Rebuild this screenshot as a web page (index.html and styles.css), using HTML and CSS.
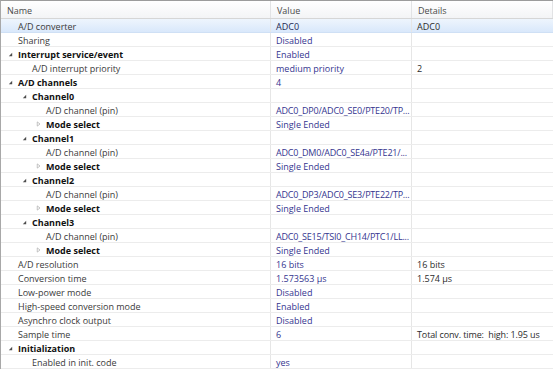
FILE: index.html
```html
<!DOCTYPE html>
<html lang="en">
<head>
    <meta charset="UTF-8">
    <title>ADC properties</title>
    <link rel="stylesheet" href="styles.css">
</head>
<body>
    <div class="grid">
        <div class="row head">
            <div class="cell">Name</div>
            <div class="cell">Value</div>
            <div class="cell">Details</div>
        </div>

        <div class="row selected">
            <div class="cell name l0"><span class="tw"></span>A/D converter</div>
            <div class="cell val dark">ADC0</div>
            <div class="cell det">ADC0</div>
        </div>
        <div class="row">
            <div class="cell name l0"><span class="tw"></span>Sharing</div>
            <div class="cell val">Disabled</div>
            <div class="cell det"></div>
        </div>
        <div class="row">
            <div class="cell name l0 group"><span class="tw open"><svg viewBox="0 0 6 6"><polygon points="5,1 5,5 1,5"/></svg></span>Interrupt service/event</div>
            <div class="cell val">Enabled</div>
            <div class="cell det"></div>
        </div>
        <div class="row">
            <div class="cell name l1"><span class="tw"></span>A/D interrupt priority</div>
            <div class="cell val">medium priority</div>
            <div class="cell det">2</div>
        </div>
        <div class="row">
            <div class="cell name l0 group"><span class="tw open"><svg viewBox="0 0 6 6"><polygon points="5,1 5,5 1,5"/></svg></span>A/D channels</div>
            <div class="cell val">4</div>
            <div class="cell det"></div>
        </div>

        <div class="row">
            <div class="cell name l1 group"><span class="tw open"><svg viewBox="0 0 6 6"><polygon points="5,1 5,5 1,5"/></svg></span>Channel0</div>
            <div class="cell val"></div>
            <div class="cell det"></div>
        </div>
        <div class="row">
            <div class="cell name l2"><span class="tw"></span>A/D channel (pin)</div>
            <div class="cell val pin">ADC0_DP0/ADC0_SE0/PTE20/TP...</div>
            <div class="cell det"></div>
        </div>
        <div class="row">
            <div class="cell name l2 group"><span class="tw shut"><svg viewBox="0 0 6 7"><polygon points="1.5,1 4.8,3.5 1.5,6"/></svg></span>Mode select</div>
            <div class="cell val">Single Ended</div>
            <div class="cell det"></div>
        </div>

        <div class="row">
            <div class="cell name l1 group"><span class="tw open"><svg viewBox="0 0 6 6"><polygon points="5,1 5,5 1,5"/></svg></span>Channel1</div>
            <div class="cell val"></div>
            <div class="cell det"></div>
        </div>
        <div class="row">
            <div class="cell name l2"><span class="tw"></span>A/D channel (pin)</div>
            <div class="cell val pin">ADC0_DM0/ADC0_SE4a/PTE21/...</div>
            <div class="cell det"></div>
        </div>
        <div class="row">
            <div class="cell name l2 group"><span class="tw shut"><svg viewBox="0 0 6 7"><polygon points="1.5,1 4.8,3.5 1.5,6"/></svg></span>Mode select</div>
            <div class="cell val">Single Ended</div>
            <div class="cell det"></div>
        </div>

        <div class="row">
            <div class="cell name l1 group"><span class="tw open"><svg viewBox="0 0 6 6"><polygon points="5,1 5,5 1,5"/></svg></span>Channel2</div>
            <div class="cell val"></div>
            <div class="cell det"></div>
        </div>
        <div class="row">
            <div class="cell name l2"><span class="tw"></span>A/D channel (pin)</div>
            <div class="cell val pin">ADC0_DP3/ADC0_SE3/PTE22/TP...</div>
            <div class="cell det"></div>
        </div>
        <div class="row">
            <div class="cell name l2 group"><span class="tw shut"><svg viewBox="0 0 6 7"><polygon points="1.5,1 4.8,3.5 1.5,6"/></svg></span>Mode select</div>
            <div class="cell val">Single Ended</div>
            <div class="cell det"></div>
        </div>

        <div class="row">
            <div class="cell name l1 group"><span class="tw open"><svg viewBox="0 0 6 6"><polygon points="5,1 5,5 1,5"/></svg></span>Channel3</div>
            <div class="cell val"></div>
            <div class="cell det"></div>
        </div>
        <div class="row">
            <div class="cell name l2"><span class="tw"></span>A/D channel (pin)</div>
            <div class="cell val pin">ADC0_SE15/TSI0_CH14/PTC1/LL...</div>
            <div class="cell det"></div>
        </div>
        <div class="row">
            <div class="cell name l2 group"><span class="tw shut"><svg viewBox="0 0 6 7"><polygon points="1.5,1 4.8,3.5 1.5,6"/></svg></span>Mode select</div>
            <div class="cell val">Single Ended</div>
            <div class="cell det"></div>
        </div>

        <div class="row">
            <div class="cell name l0"><span class="tw"></span>A/D resolution</div>
            <div class="cell val">16 bits</div>
            <div class="cell det">16 bits</div>
        </div>
        <div class="row">
            <div class="cell name l0"><span class="tw"></span>Conversion time</div>
            <div class="cell val">1.573563 µs</div>
            <div class="cell det">1.574 µs</div>
        </div>
        <div class="row">
            <div class="cell name l0"><span class="tw"></span>Low-power mode</div>
            <div class="cell val">Disabled</div>
            <div class="cell det"></div>
        </div>
        <div class="row">
            <div class="cell name l0"><span class="tw"></span>High-speed conversion mode</div>
            <div class="cell val">Enabled</div>
            <div class="cell det"></div>
        </div>
        <div class="row">
            <div class="cell name l0"><span class="tw"></span>Asynchro clock output</div>
            <div class="cell val">Disabled</div>
            <div class="cell det"></div>
        </div>
        <div class="row">
            <div class="cell name l0"><span class="tw"></span>Sample time</div>
            <div class="cell val">6</div>
            <div class="cell det tight">Total conv. time:&nbsp; high: 1.95 us</div>
        </div>
        <div class="row">
            <div class="cell name l0 group"><span class="tw open"><svg viewBox="0 0 6 6"><polygon points="5,1 5,5 1,5"/></svg></span>Initialization</div>
            <div class="cell val"></div>
            <div class="cell det"></div>
        </div>
        <div class="row">
            <div class="cell name l1"><span class="tw"></span>Enabled in init. code</div>
            <div class="cell val">yes</div>
            <div class="cell det"></div>
        </div>
    </div>
</body>
</html>
```

FILE: styles.css
```css
body {
    margin: 0;
    background: #fff;
    font-family: "Open Sans", "Noto Sans", sans-serif;
    font-size: 9px;
    color: #3a3a3a;
}
.grid {
    width: 553px;
    height: 369px;
    box-sizing: border-box;
    border-top: 1px solid #9c9c9c;
    border-left: 1px solid #a8a8a8;
    overflow: hidden;
}
.row {
    display: grid;
    grid-template-columns: 270px 141px 1fr;
    height: 14px;
    box-sizing: border-box;
    border-bottom: 1px solid #ececec;
}
.cell {
    display: flex;
    align-items: center;
    padding-left: 5px;
    padding-top: 1px;
    white-space: nowrap;
    overflow: hidden;
    border-right: 1px solid #e6e6e6;
}
.head {
    height: 18px;
    background: linear-gradient(#ffffff, #f3f4f6);
    border-bottom: 1px solid #d6d6d6;
    color: #4a4a4a;
}
.head .cell {
    border-right: 1px solid #e2e3e5;
    padding-left: 6px;
}
.selected {
    background: linear-gradient(#eef5fd, #d9e8fb);
    border-bottom: 1px solid #cfe0f5;
}
.name {
    padding-left: 0;
}
.l0 { padding-left: 7px; }
.l1 { padding-left: 21px; }
.l2 { padding-left: 35px; }
.tw {
    width: 10px;
    height: 8px;
    display: flex;
    align-items: center;
    flex: none;
}
.tw svg {
    width: 5px;
    height: 5px;
}
.open polygon {
    fill: #4d4d4d;
}
.shut svg {
    width: 5px;
    height: 6px;
}
.shut polygon {
    fill: #fff;
    stroke: #a8a8a8;
    stroke-width: 0.8;
}
.group {
    font-weight: bold;
    color: #111;
}
.val {
    color: #35358f;
}
.val.dark {
    color: #1d2a55;
}
.pin {
    letter-spacing: -0.2px;
}
.det {
    color: #2c2c2c;
    border-right: none;
}
.tight {
    letter-spacing: -0.12px;
}
```
